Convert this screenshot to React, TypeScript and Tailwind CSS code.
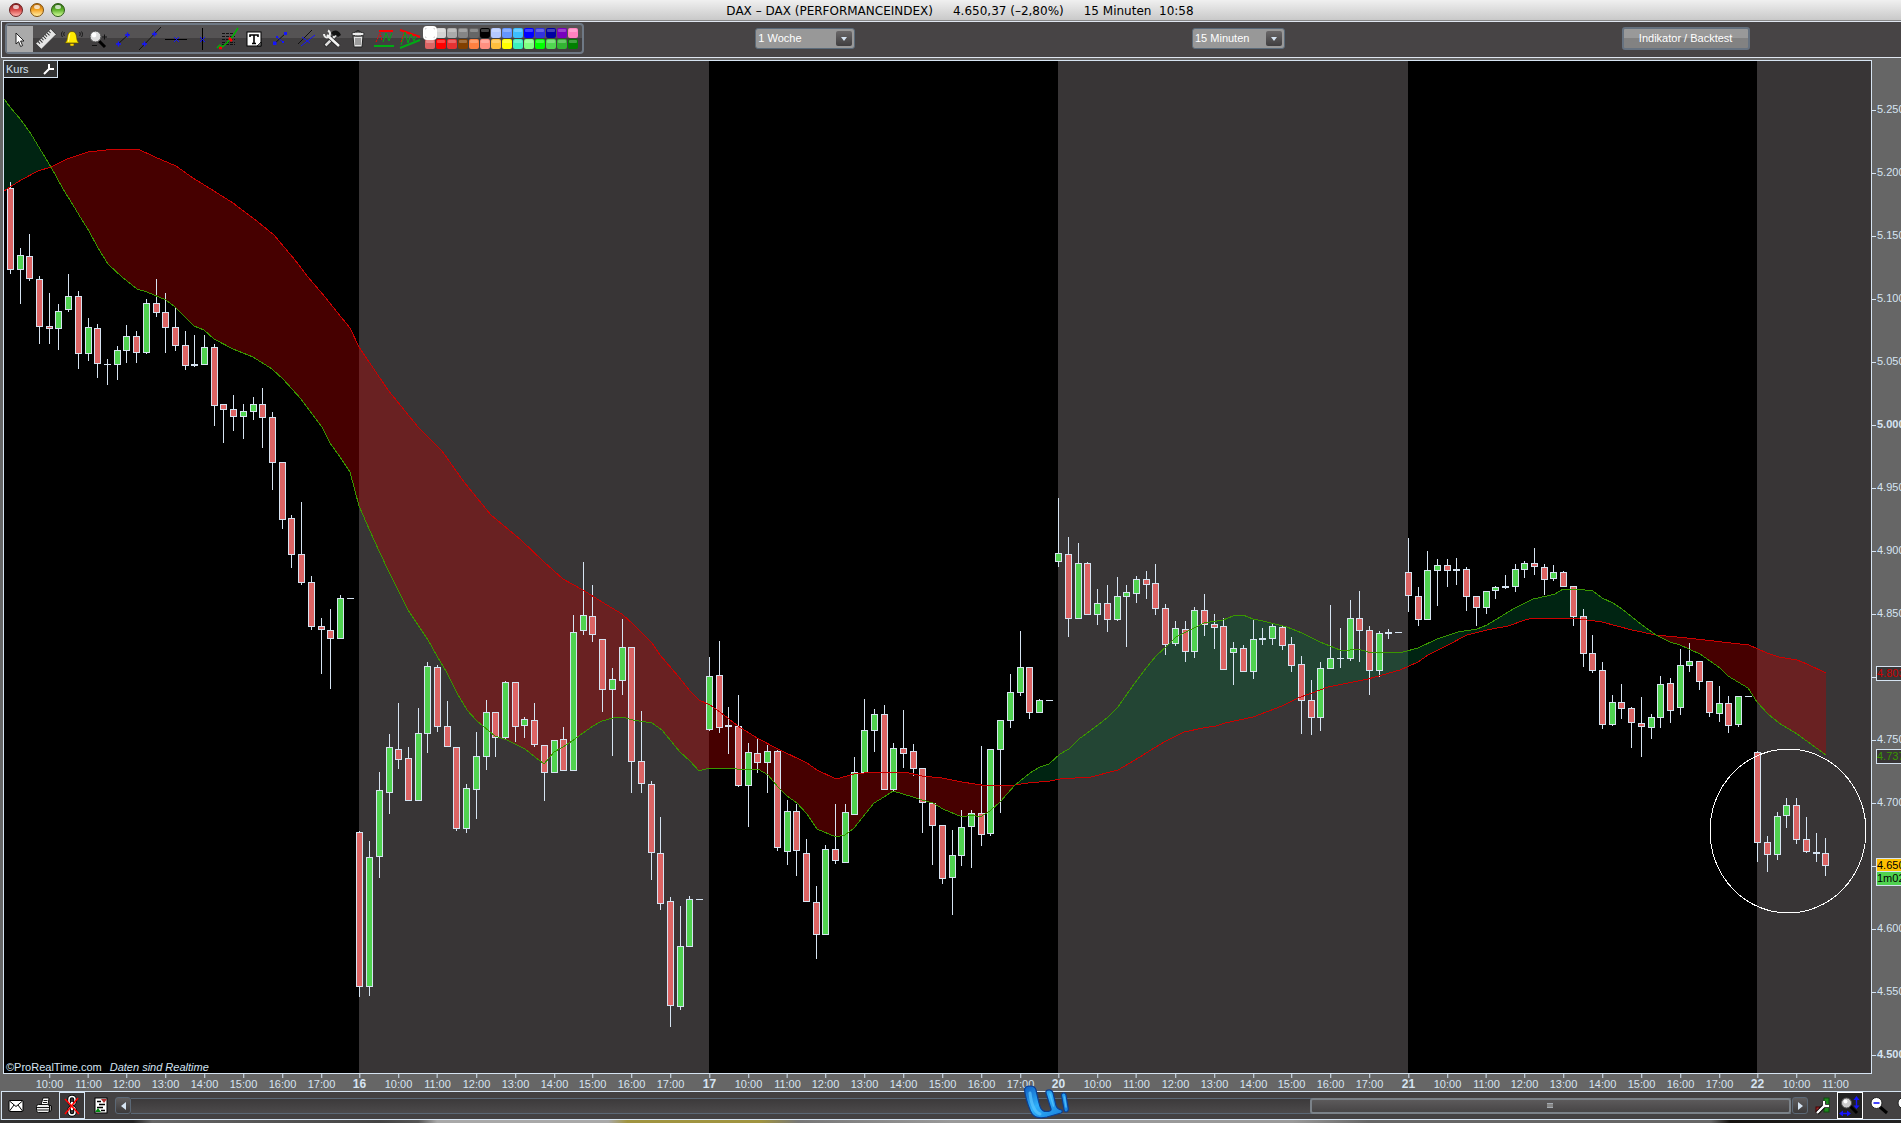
import React from "react";

const UI = "font-['Liberation_Sans',Arial,sans-serif]";

/* Each session holds 36 quarter-hour bars: colour, high, body top, body bottom, low. */
const SESSIONS: string[] = [
  "r182,188,270,274 g248,255,270,304 r234,256,279,281 r276,279,327,344 r293,326,329,344 g304,311,329,350 g274,296,310,312 r291,296,354,369 g318,327,354,361 r324,328,364,378 d359,364,365,385 g346,350,365,380 g325,336,351,363 r331,336,353,363 g299,303,353,354 r279,303,313,317 r293,312,328,353 r308,327,346,351 r331,345,366,370 d335,364,366,367 g335,347,365,365 r344,347,406,426 r404,404,410,443 r395,409,417,431 g404,411,417,439 g397,404,412,420 r388,404,418,448 r412,417,463,490 r462,462,520,529 r515,518,555,568 r502,554,583,585 r576,582,627,630 r618,626,630,674 r609,630,639,689 g595,598,639,639 d598,598,599,599",
  "r831,832,987,997 g841,857,987,996 g772,790,857,878 g734,747,793,814 r703,749,760,769 r747,758,801,801 g708,733,801,801 g662,666,734,753 r665,667,727,732 r701,726,747,747 r747,747,829,831 g784,788,829,833 g732,756,790,819 g700,712,757,770 r712,712,738,757 g681,682,738,739 r682,682,727,742 g717,719,726,738 r703,720,745,747 r745,745,773,801 g740,740,773,773 r727,739,771,771 g615,632,771,771 g562,615,631,635 r585,616,635,642 r639,639,690,712 g668,679,690,756 g619,647,681,695 r647,647,762,793 r711,761,784,793 r781,784,853,880 r817,853,904,910 r897,901,1006,1027 g906,946,1007,1010 g896,899,947,947 d899,899,900,900",
  "g657,676,730,731 r641,675,728,733 d707,725,727,754 r695,726,786,787 g743,752,786,827 r739,753,763,773 g745,751,763,793 r750,751,848,851 g800,811,852,865 r804,811,851,876 r839,853,902,902 r886,902,935,959 g845,849,935,935 r804,849,861,864 g804,812,863,863 g757,772,815,815 g699,730,773,773 g709,714,731,752 r705,714,790,790 g743,748,790,792 r710,748,754,768 r744,751,769,776 r768,768,803,833 r803,803,826,865 r825,825,879,884 g830,855,878,915 g810,827,856,866 g810,813,827,868 r746,813,835,846 g749,749,834,836 g720,720,750,813 g674,692,721,728 g631,667,693,696 r667,667,713,719 g699,700,713,713 d700,700,701,701",
  "g498,553,562,567 r537,554,619,637 g543,563,619,619 r562,563,615,615 g589,603,615,625 r585,603,620,632 g577,596,620,621 g585,592,597,647 g576,579,594,603 r571,579,585,599 r564,583,609,615 r604,608,645,655 g621,628,644,646 r621,629,652,662 g607,610,652,658 r594,610,625,636 r614,624,628,649 r618,626,670,670 g642,648,653,685 r645,648,672,672 g620,639,672,679 d628,638,640,645 g624,626,639,645 r626,627,646,650 r637,644,666,672 r656,664,701,734 r680,700,718,735 g662,668,718,731 g605,658,669,669 d628,658,659,668 g600,618,659,661 r591,618,631,662 r626,630,671,695 g631,633,671,677 d629,632,634,639 d632,632,633,633",
  "r538,572,596,612 r587,596,620,626 g551,570,620,620 g559,565,571,606 r559,565,571,587 d558,569,571,585 r567,569,597,611 r596,596,608,626 g591,591,608,614 g586,587,591,599 d575,586,588,589 g564,569,587,592 g561,563,570,578 r548,563,567,575 r564,567,580,595 g565,572,579,581 r571,572,587,587 r586,586,617,626 r609,616,654,667 r635,653,671,673 r662,670,725,729 g695,702,725,726 r684,702,709,719 r707,708,723,748 r697,723,727,757 g714,717,728,739 g676,684,718,728 r678,683,711,723 g649,665,708,715 g643,661,666,672 r661,661,682,690 r681,681,713,717 g686,703,714,722 r696,703,726,733 g696,696,725,727 d696,696,697,697",
  "r751,752,843,862 r836,842,855,872 g812,816,855,860 g798,805,816,828 r798,805,840,844 r817,839,852,853 d833,852,854,862 r838,853,866,876",
];

type Pt = [number, number];
const parse = (s: string): Pt[] => s.split(" ").map((p) => p.split(",").map(Number) as Pt);

const SLOW = parse(
  "4,191 10,187 21,180 38,171 51,167 67,159 88,152 115,149 138,149 155,157 176,166 193,178 214,191 233,203 253,218 274,235 295,260 308,277 325,297 337,312 350,328 359,347 388,390 418,427 442,451 464,482 491,515 521,540 544,562 563,579 583,590 602,602 622,614 633,624 652,643 660,655 678,676 690,691 699,700 710,705 720,712 738,726 757,738 778,749 807,763 817,770 836,779 854,774 874,772 884,773 894,772 905,772 922,776 942,778 962,782 988,786 1015,785 1028,783 1050,781 1060,779 1091,777 1118,770 1140,757 1154,748 1166,741 1184,732 1203,728 1216,726 1225,723 1253,717 1282,706 1298,698 1312,693 1328,687 1368,679 1400,670 1418,662 1428,655 1448,645 1467,635 1487,630 1508,626 1525,620 1533,618 1553,618 1580,619 1602,622 1632,630 1656,635 1687,638 1740,644 1749,645 1767,653 1779,657 1797,660 1807,664 1826,673"
);
const FAST = parse(
  "4,99 10,107 21,120 31,134 40,149 51,167 63,189 73,205 82,220 89,231 98,248 108,264 122,277 137,289 147,292 166,300 175,307 194,326 204,330 214,339 233,349 253,357 272,369 283,379 301,399 322,427 330,443 340,457 350,472 359,506 374,540 388,570 408,610 428,640 437,656 447,673 457,693 467,710 477,721 495,736 507,740 525,749 535,757 544,764 554,752 563,747 575,739 583,733 593,726 602,721 613,718 622,717 633,720 652,723 662,730 680,752 690,761 699,771 709,768 718,769 728,768 737,769 758,769 768,775 778,787 787,796 797,803 807,814 817,829 836,837 845,835 854,828 874,803 884,797 893,791 903,794 913,797 922,800 933,803 943,809 962,817 972,815 980,817 990,811 1000,802 1015,785 1030,773 1040,767 1049,764 1060,754 1069,749 1079,739 1098,725 1108,717 1118,707 1127,694 1137,680 1147,667 1156,656 1167,646 1176,637 1194,628 1204,623 1223,620 1233,616 1243,615 1253,619 1263,621 1287,627 1302,633 1320,642 1340,650 1350,650 1358,649 1368,652 1385,652 1403,652 1418,648 1437,639 1458,632 1477,629 1487,625 1505,614 1515,608 1533,599 1547,596 1555,594 1563,589 1577,589 1593,591 1602,598 1613,603 1622,609 1642,625 1656,635 1670,642 1680,645 1700,654 1720,668 1728,676 1748,688 1757,702 1768,714 1779,723 1797,734 1826,755"
);

const str = (p: Pt[]) => p.map((q) => q.join(",")).join(" ");
const band = (a: number, b: number) => {
  const cut = (l: Pt[]) => l.filter(([x]) => x >= a && x <= b);
  return str([...cut(SLOW), ...cut(FAST).reverse()]);
};
const BANDS: [number, number, string][] = [
  [4, 51, "rgb(0,100,50)"],
  [51, 1015, "rgb(194,0,0)"],
  [1015, 1656, "rgb(0,100,50)"],
  [1656, 1830, "rgb(194,0,0)"],
];

const barX = (i: number) => Math.floor(10.4 + 9.708 * i);

function Chart() {
  return (
    <svg className="block h-full w-full" viewBox="4 61 1867 1012" preserveAspectRatio="none" shapeRendering="crispEdges" role="img" aria-label="DAX 15 Minuten">
      <rect x="4" y="61" width="1867" height="1012" fill="#000" />
      <rect x="359" y="61" width="350" height="1012" fill="#383536" />
      <rect x="1058" y="61" width="350" height="1012" fill="#383536" />
      <rect x="1757" y="61" width="114" height="1012" fill="#383536" />
      {BANDS.map(([a, b, c]) => (
        <polygon key={a} points={band(a, b)} fill={c} fillOpacity="0.36" />
      ))}
      {SESSIONS.flatMap((day, d) =>
        day.split(" ").map((bar, i) => {
          const [h, t, b, l] = bar.slice(1).split(",").map(Number);
          const x = barX(d * 36 + i);
          const kind = bar[0];
          return (
            <g key={d * 36 + i} fill="#d6e4f2">
              {h < t && <rect x={x} y={h} width="1" height={t - h} />}
              {l > b && <rect x={x} y={b} width="1" height={l - b} />}
              <rect x={x - 3} y={t} width="7" height={b - t} />
              {kind !== "d" && <rect x={x - 2} y={t + 1} width="5" height={b - t - 2} fill={kind === "g" ? "#50d250" : "#dc6464"} />}
            </g>
          );
        })
      )}
      <polyline points={str(SLOW)} fill="none" stroke="#cc0000" />
      <polyline points={str(FAST)} fill="none" stroke="#399600" />
      <ellipse cx="1788" cy="831" rx="78" ry="82" fill="none" stroke="#fff" />
    </svg>
  );
}

const DAYS = ["", "16", "17", "20", "21", "22"];
const TIMES = DAYS.flatMap((name, d) => {
  const out: { label: string; i: number; bold: boolean }[] = [];
  if (name) out.push({ label: name, i: d * 36, bold: true });
  for (let h = 10; h <= (d === 5 ? 11 : 17); h++) out.push({ label: `${h}:00`, i: d * 36 + (h - 9) * 4, bold: false });
  return out;
});
const PRICES = Array.from({ length: 16 }, (_, k) => {
  const v = 5250 - k * 50;
  const s = String(v);
  return { label: `${s[0]}.${s.slice(1)}`, y: 110 + k * 63, bold: v % 500 === 0, hidden: v === 4800 || v === 4650 };
});
const TAGS = [
  { label: "4.803", y: 666, cls: "bg-[#383536] text-[#cc0000]" },
  { label: "4.737", y: 749, cls: "bg-[#383536] text-[#399600]" },
  { label: "4.650", y: 858, cls: "bg-[#ffc000] text-black" },
  { label: "1m02", y: 871, cls: "bg-[#50d250] text-black" },
];

const Svg = ({ children }: { children: React.ReactNode }) => (
  <svg width="26" height="26" viewBox="0 0 26 26" fill="none" aria-hidden="true">
    {children}
  </svg>
);
const cross = (x: number, y: number) => `M${x - 2} ${y}h5M${x + 0.5} ${y - 2.5}v5`;

const TOOLS: { name: string; icon: React.ReactNode }[] = [
  { name: "Auswahl", icon: <path d="M9 7v11l2.6-2.3 2 4.8 2-.9-2-4.6h3.4z" fill="#fff" stroke="#111" strokeWidth=".9" /> },
  {
    name: "Lineal",
    icon: (
      <g transform="rotate(-45 13 13)">
        <rect x="2.500" y="9" width="21" height="8" fill="#e6e6e6" stroke="#333" strokeWidth=".8" />
        <path d="M5.500 9v3M8 9v4M10.500 9v3M13 9v4M15.500 9v3M18 9v4M20.500 9v3" stroke="#333" />
      </g>
    ),
  },
  {
    name: "Alarm",
    icon: (
      <>
        <path d="M13 5.500c-4 0-4.500 4-4.800 7-.2 2.300-1.200 3.300-2.200 4.500h14c-1-1.200-2-2.200-2.200-4.500-.3-3-.8-7-4.800-7z" fill="#ffea00" stroke="#5a4c00" strokeWidth=".7" />
        <path d="M11 7.500c-1 2-1 5-1.500 8" stroke="#fffbb0" />
        <rect x="11" y="17.500" width="4" height="2.500" rx="1" fill="#ffd800" stroke="#5a4c00" strokeWidth=".5" />
        <path d="M5.500 6c-1 1-1 3 0 4M3.500 5.500c-1.300 1.500-1.300 4 0 5.500M20.500 6c1 1 1 3 0 4M22.500 5.500c1.300 1.500 1.300 4 0 5.500" stroke="#111" strokeWidth=".9" />
      </>
    ),
  },
  {
    name: "Zoom",
    icon: (
      <>
        <path d="M14 15l6 6" stroke="#000" strokeWidth="3" />
        <circle cx="10.500" cy="10.500" r="5.500" fill="#ddd" stroke="#444" />
        <circle cx="9" cy="9" r="2.400" fill="#fff" />
        <path d="M17 11h5M19.500 8.500v5M7 19.500h5" stroke="#111" />
      </>
    ),
  },
  { name: "Segment", icon: <><path d="M7 18l11-10" stroke="#111" /><path d={cross(7, 18) + cross(16, 9)} stroke="#1414ff" strokeWidth="1.400" /></> },
  { name: "Gerade", icon: <><path d="M2 24L24 1" stroke="#111" /><path d={cross(7, 18) + cross(17, 8)} stroke="#1414ff" strokeWidth="1.400" /></> },
  { name: "Horizontale", icon: <><path d="M2 13.500h22" stroke="#000" /><path d="M11 11l5 5M16 11l-5 5" stroke="#1414ff" /></> },
  { name: "Vertikale", icon: <><path d="M13.500 2v22" stroke="#000" /><path d="M11 11l5 5M16 11l-5 5" stroke="#1414ff" /></> },
  {
    name: "Fibonacci",
    icon: (
      <>
        <path d="M7 7.500h13M7 10.500h13M7 13.500h13M7 16.500h13M7 18.500h13" stroke="#111" strokeDasharray="3 1" />
        <path d="M2 22l3-3 2 2 5-4 3-4 3-3 5-8" stroke="#00b400" strokeWidth="1.500" />
        <path d="M4 22h3M14 12l3 3" stroke="red" strokeWidth="2.500" />
      </>
    ),
  },
  {
    name: "Text",
    icon: (
      <>
        <rect x="6" y="6" width="14" height="14" fill="#fff" stroke="#000" />
        <path d="M9 11V9h8v2M13 9v8M11 17.500h4" stroke="#000" strokeWidth="1.600" />
        <path d="M20 16l-4 4h4z" fill="#777" stroke="#000" strokeWidth=".7" />
      </>
    ),
  },
  { name: "Pfeil", icon: <><path d="M7 18L19 7" stroke="#111" /><path d="M10 11l6 5" stroke="#1414ff" /><path d="M6 19v-3.500h3.500V19zM17 9V6h3v3zM9 12v-2h2v2zM15 17v-2h2v2z" fill="#1414ff" /></> },
  { name: "Kanal", icon: <><path d="M5 18L19 4" stroke="#111" /><path d="M8 20L22 9M9 11l8 6" stroke="#1414ff" /></> },
  {
    name: "Werkzeuge",
    icon: (
      <>
        <path d="M6 20L17 9" stroke="#222" strokeWidth="4" />
        <path d="M6.500 19.500L17 9" stroke="#ddd" strokeWidth="2.500" />
        <path d="M12 7c3-4 8-3 10 2l-3 2-2-2-2 1z" fill="#111" />
        <path d="M8 9l12 11" stroke="#222" strokeWidth="4" />
        <path d="M8 9l12 11" stroke="#f4f4f4" strokeWidth="2.500" />
        <path d="M5 8c0 3 2 4 5 3M9 4.500c2 1 2.500 3 1.500 6" stroke="#eee" strokeWidth="2" />
      </>
    ),
  },
  {
    name: "Papierkorb",
    icon: (
      <>
        <path d="M8 10l1 11h8l1-11z" fill="#e4e4e4" stroke="#222" />
        <ellipse cx="13" cy="8" rx="6.500" ry="2" fill="#eee" stroke="#222" />
        <path d="M11 6c0-2 4-2 4 0" stroke="#222" />
        <path d="M11 12v7M13 12v7M15 12v7" stroke="#555" />
      </>
    ),
  },
  {
    name: "Rechteckmuster",
    icon: <><path d="M8 5h14" stroke="red" strokeWidth="2" /><path d="M3 20h20" stroke="#00aa14" strokeWidth="2" /><path d="M5 16l4-9 2 8" stroke="red" strokeDasharray="2 1" /><path d="M12 16l3-9 3 8 3-8" stroke="#00aa14" /></>,
  },
  {
    name: "Dreieckmuster",
    icon: <><path d="M3 4l20 7" stroke="red" strokeWidth="2" /><path d="M3 22l20-8" stroke="#00aa14" strokeWidth="2" /><path d="M4 19L8 6l3 11 3-9 3 7 2-5" stroke="#00aa14" /><path d="M4 16l3-9" stroke="red" strokeDasharray="2 1" /></>,
  },
];

const SWATCHES = [
  "bg-[#ffffff]", "bg-[#d3d3d3]", "bg-[#aaaaaa]", "bg-[#858585]", "bg-[#666666]", "bg-[#000000]", "bg-[#b4c8ff]",
  "bg-[#6496ff]", "bg-[#3cbeff]", "bg-[#0000ff]", "bg-[#3232dc]", "bg-[#0000a0]", "bg-[#7800be]", "bg-[#ff82c0]",
  "bg-[#dc6464]", "bg-[#ff0000]", "bg-[#e63232]", "bg-[#824000]", "bg-[#ff8040]", "bg-[#ff9080]", "bg-[#ffbe3c]",
  "bg-[#ffff00]", "bg-[#3cf0be]", "bg-[#80ff80]", "bg-[#00ff00]", "bg-[#50d750]", "bg-[#32b432]", "bg-[#008000]",
];

function Dropdown({ label, value, width }: { label: string; value: string; width: string }) {
  return (
    <div className={`relative h-[21px] rounded-[3px] border border-[#5b6b7a] bg-[#989898] ${width}`}>
      <select aria-label={label} className="block h-[19px] w-full appearance-none bg-transparent pb-px pl-[2px] text-[11px] leading-[18px] text-white outline-none">
        <option>{value}</option>
      </select>
      <span className="pointer-events-none absolute top-[2px] right-[2px] flex h-[15px] w-[16px] items-center justify-center rounded-[2px] bg-linear-to-b from-[#6a6869] to-[#403e3f]">
        <svg width="6" height="4" viewBox="0 0 6 4"><path d="M0 0h6L3 4z" fill="#d6e4f2" /></svg>
      </span>
    </div>
  );
}

const LIGHTS = [
  { name: "Schließen", cls: "from-[#8a1c1c] via-[#d84a4a] to-[#ffb4b0] border-[#6b2020]" },
  { name: "Minimieren", cls: "from-[#b86a08] via-[#f5a623] to-[#fff0a0] border-[#80500c]" },
  { name: "Zoomen", cls: "from-[#2c6a10] via-[#62b52c] to-[#d4ff98] border-[#2c5a14]" },
];

const LOGO =
  "M1.500 4.500C2 1.500 4 1 7 1C10.500 1 12.500 2.500 13 5L15.300 15C16.500 20 17.500 26.500 23 26.500C26 26.500 28.500 26 28 24L23 8C22.500 5.500 24 4.800 26.300 4.800C28.500 4.800 29.500 6 30 8L33 20.500C34 23.500 36 24.500 38.700 25C39.500 26 39.500 27.500 38 28L24 32C14 34.500 9.500 31 7.500 26C5 20 2 10 1.500 4.500Z M38.500 10C38.500 8.500 39.500 7.800 40.700 7.800C42 7.800 42.800 8.600 43 10L45.300 23.500C45.500 25.500 44.500 27 43 27C41.800 27 41.200 26 41 24.500Z";

export default function App() {
  return (
    <div className={`flex h-screen w-full flex-col overflow-hidden bg-[#666] text-[#d6e4f2] ${UI}`}>
      <header className="relative flex h-[21px] shrink-0 items-center justify-center border-b border-[#868686] bg-linear-to-b from-[#f0f0f0] to-[#c9c9c9] pl-[19px]">
        <div className="absolute top-[3px] left-[9px] flex gap-[7px]">
          {LIGHTS.map((l) => (
            <button key={l.name} aria-label={l.name} className={`relative h-[14px] w-[14px] rounded-full border bg-linear-to-b ${l.cls}`}>
              <span className="absolute top-px left-[3px] h-[4px] w-[6px] rounded-full bg-white/70" />
            </button>
          ))}
        </div>
        <h1 className="flex gap-[20px] pt-px font-['DejaVu_Sans',sans-serif] text-[12px] leading-[20px] whitespace-pre text-black">
          <span>DAX – DAX (PERFORMANCEINDEX)</span>
          <span>4.650,37 (–2,80%)</span>
          <span>15 Minuten  10:58</span>
        </h1>
      </header>

      <div className="ml-px flex h-[37px] shrink-0 items-center border-y border-l border-[#dfe6f0] bg-[#474445] pb-[2px]">
        <div className="ml-[3px] flex h-[31px] shrink-0 items-center rounded-[4px] border-2 border-[#6f7985] bg-linear-to-b from-[#555354] from-50% to-[#413f40] to-50% pr-[4px]">
          {TOOLS.map((t, i) => (
            <button key={t.name} aria-label={t.name} className={`h-[26px] w-[26px] ${i === 0 ? "bg-[#aaa]" : ""}`}>
              <Svg>{t.icon}</Svg>
            </button>
          ))}
          <div className="ml-[2px] grid grid-cols-14 gap-px">
            {SWATCHES.map((c, i) => (
              <button key={c} aria-label={`Farbe ${i + 1}`} className={`relative h-[10px] w-[10px] rounded-[2px] ${c} ${i === 0 ? "z-10 outline-2 outline-white" : ""}`}>
                {i > 0 && <span className="absolute inset-x-px top-px h-[3px] rounded-[1px] bg-white/25" />}
              </button>
            ))}
          </div>
        </div>
        <div className="-mr-[17px] ml-[3px] flex grow items-center justify-around">
          <Dropdown label="Zeitraum" value="1 Woche" width="w-[100px]" />
          <Dropdown label="Intervall" value="15 Minuten" width="w-[93px]" />
          <button className="h-[23px] w-[128px] rounded-[3px] border-2 border-[#667280] bg-linear-to-b from-[#999] from-50% to-[#828282] to-50% pb-px text-[11px] leading-[18px] text-white">
            Indikator / Backtest
          </button>
        </div>
      </div>

      <main className="flex min-h-0 grow flex-col pt-[2px] pl-[3px]">
        <div className="flex min-h-0 grow">
          <div className="relative min-w-0 grow border border-[#d6e4f2]">
            <div className="absolute inset-0">
              <Chart />
            </div>
            <div className="absolute -top-px -left-px flex h-[18px] w-[55px] items-center justify-between border border-[#d6e4f2] bg-[#333] pr-[3px] pb-px pl-[2px] text-[11px] leading-[14px]">
              Kurs
              <button aria-label="Kurs einstellen">
                <svg width="11" height="12" viewBox="0 0 11 12" fill="none" stroke="#fff" strokeWidth="2">
                  <path d="M1 11l5-5M6 6V1M6 6h5" />
                </svg>
              </button>
            </div>
            <p className="absolute -bottom-px left-[2px] flex gap-[8px] text-[11px] leading-[13px]">
              <span>©ProRealTime.com</span>
              <em>Daten sind Realtime</em>
            </p>
          </div>
          <div className="relative my-px w-[29px] shrink-0 overflow-hidden text-[11px] leading-[12px]">
            {PRICES.map((p) => (
              <div key={p.label} className="absolute left-0 flex gap-px" style={{ top: `${((p.y - 61) / 1012) * 100}%` }}>
                <span className="h-px w-[4px] shrink-0 bg-[#d6e4f2]" />
                {!p.hidden && <span className={`-mt-[7px] ${p.bold ? "font-bold" : ""}`}>{p.label}</span>}
              </div>
            ))}
            {TAGS.map((t) => (
              <div key={t.label} className={`absolute left-[4px] h-[15px] border border-[#d6e4f2] text-[11px] leading-[13px] ${t.cls}`} style={{ top: `${((t.y - 61) / 1012) * 100}%` }}>
                {t.label}
              </div>
            ))}
          </div>
        </div>
        <div className="relative mr-[30px] ml-px h-[17px] shrink-0 text-[11px] leading-[13px]">
          {TIMES.map((t) => (
            <div key={t.i} className="absolute top-0 flex -translate-x-1/2 flex-col items-center" style={{ left: `${((barX(t.i) - 3.5) / 1867) * 100}%` }}>
              <span className="h-[4px] w-px bg-[#d6e4f2]" />
              <span className={t.bold ? "text-[12px] font-bold" : ""}>{t.label}</span>
            </div>
          ))}
          <svg className="absolute top-[11px] left-[54.6%] z-10" width="48" height="35" viewBox="0 0 48 35" aria-hidden="true">
            <defs>
              <linearGradient id="logo" x1="0" y1="0" x2="1" y2="1">
                <stop offset="0" stopColor="#0f5cc0" />
                <stop offset="0.45" stopColor="#2fb0fa" />
                <stop offset="1" stopColor="#1478d8" />
              </linearGradient>
            </defs>
            <path d={LOGO} fill="url(#logo)" stroke="#0b3f94" strokeWidth="1.200" />
            <path d="M7 8c1 9 4 19 10 21" fill="none" stroke="#5cc8ff" strokeWidth="3" strokeLinecap="round" opacity=".7" />
            <path d="M27 9l3.500 12M41.500 12l1.500 10" fill="none" stroke="#5cc8ff" strokeWidth="1.500" strokeLinecap="round" opacity=".7" />
          </svg>
        </div>
      </main>

      <footer className="ml-px flex h-[29px] shrink-0 items-center border-y border-l border-[#d6e4f2] bg-[#434142]">
        <button aria-label="E-Mail" className="ml-[6px] flex h-[27px] w-[16px] shrink-0 items-center">
          <svg className="shrink-0" width="16" height="14" viewBox="0 0 16 14" fill="#fff" stroke="#000"><rect x="1" y="1.500" width="14" height="11" rx="1" /><path d="M1.500 2l6.500 5.500L14.500 2M1.500 12l4.500-6M14.500 12L10 6" fill="none" /></svg>
        </button>
        <button aria-label="Drucken" className="ml-[11px] flex h-[27px] w-[18px] shrink-0 items-center">
          <svg className="shrink-0" width="18" height="18" viewBox="0 0 18 18" stroke="#000" strokeWidth=".9"><path d="M6 8l2-7h6l-1 7z" fill="#fff" /><path d="M8.500 3.500h4M8 5.500h4" /><rect x="1.500" y="7.500" width="13" height="8" rx="2" fill="#eee" /><path d="M14.500 8l2 1v4l-2 2z" fill="#999" /><path d="M2 10.500h12M2 13h12" /></svg>
        </button>
        <button aria-label="Verknüpfung" className="ml-[6px] flex h-[27px] w-[26px] shrink-0 items-center justify-center border border-[#d6e4f2] bg-[#3a3839]">
          <svg width="18" height="22" viewBox="0 0 18 22" fill="none"><rect x="6" y="1.500" width="6" height="8" rx="3" stroke="#000" strokeWidth="3.500" /><rect x="6" y="12" width="6" height="8" rx="3" stroke="#000" strokeWidth="3.500" /><rect x="6" y="1.500" width="6" height="8" rx="3" stroke="#fff" strokeWidth="1.500" /><rect x="6" y="12" width="6" height="8" rx="3" stroke="#fff" strokeWidth="1.500" /><path d="M9 7v8" stroke="#fff" strokeWidth="2" /><path d="M2 4l14 15M15 3L2 19" stroke="red" strokeWidth="1.600" /></svg>
        </button>
        <button aria-label="Liste" className="ml-[9px] flex h-[27px] w-[16px] shrink-0 items-center">
          <svg className="shrink-0" width="15" height="17" viewBox="0 0 15 17"><rect x="1" y="1" width="12" height="15" fill="#fff" stroke="#000" /><path d="M3 4.500h4M5 7.500h6M3 10.500h6M7 13.500h4" stroke="#000" strokeWidth="1.500" /><path d="M7 2h6l-3 4z" fill="#b03030" /><path d="M1 15h6l-3-4z" fill="#008a10" /></svg>
        </button>
        <button aria-label="Zurück" className="ml-[5px] flex h-[17px] w-[16px] shrink-0 items-center justify-center rounded-[3px] border border-[#5b6876] bg-linear-to-b from-[#605e5f] to-[#3c3a3b]">
          <svg width="5" height="8" viewBox="0 0 5 8"><path d="M5 0v8L0 4z" fill="#d6e4f2" /></svg>
        </button>
        <div className="flex h-[16px] grow justify-end border-y border-[#5b6876] bg-linear-to-b from-[#3c3a3b] to-[#4c4a4b]">
          <div className="-my-px flex w-[29%] items-center justify-center rounded-[3px] border-2 border-[#7b8289] bg-linear-to-b from-[#5c5a5b] to-[#474546]">
            <span className="mr-px h-[5px] w-[6px] border-y border-[#a5abb2] bg-[#868686]" />
          </div>
        </div>
        <button aria-label="Vor" className="ml-px flex h-[17px] w-[16px] shrink-0 items-center justify-center rounded-[3px] border border-[#5b6876] bg-linear-to-b from-[#605e5f] to-[#3c3a3b]">
          <svg width="5" height="8" viewBox="0 0 5 8"><path d="M0 0v8l5-4z" fill="#d6e4f2" /></svg>
        </button>
        <button aria-label="Einstellungen" className="ml-[6px] flex h-[27px] w-[18px] shrink-0 items-center">
          <svg className="shrink-0" width="18" height="20" viewBox="0 0 18 20" fill="none"><rect x="10" y="2" width="5" height="14" fill="#1e8a1e" stroke="#0c4a0c" /><rect x="2" y="11" width="4" height="5" fill="#a02828" stroke="#400" /><path d="M3 17l7-7M10 10V5M10 10h5" stroke="#000" strokeWidth="4" /><path d="M3 17l7-7M10 10V5M10 10h5" stroke="#fff" strokeWidth="2.400" /></svg>
        </button>
        <button aria-label="Autozoom" className="ml-[5px] flex h-[27px] w-[26px] shrink-0 items-center justify-center border border-white bg-[#222]">
          <svg className="shrink-0" width="22" height="20" viewBox="0 0 22 20" fill="none"><path d="M11 10l7 7" stroke="#000" strokeWidth="3" /><circle cx="7.500" cy="7" r="5" fill="#ccc" stroke="#555" /><circle cx="6.500" cy="5.500" r="2" fill="#fff" /><path d="M17.500 3v8M3 17.500h7" stroke="#1414ff" strokeWidth="1.400" /><path d="M17.500 0l3 4h-6zM17.500 13l3-3.500h-6zM0 17.500l4-3v6zM12 17.500l-4-3v6z" fill="#1414ff" /></svg>
        </button>
        <button aria-label="Verkleinern" className="ml-[7px] flex h-[27px] w-[19px] shrink-0 items-center">
          <svg className="shrink-0" width="19" height="20" viewBox="0 0 19 20" fill="none"><path d="M10 11l7 6" stroke="#000" strokeWidth="3" /><circle cx="6.500" cy="7" r="5.500" fill="#fff" stroke="#222" /><path d="M3.500 7h6" stroke="#1414ff" strokeWidth="1.600" /></svg>
        </button>
        <button aria-label="Vergrößern" className="ml-[8px] flex h-[27px] w-[4px] shrink-0 items-center overflow-hidden">
          <svg className="shrink-0" width="19" height="20" viewBox="0 0 19 20" fill="none"><circle cx="6.500" cy="7" r="5.500" fill="#fff" stroke="#222" /></svg>
        </button>
      </footer>
      <div className="h-[3px] shrink-0 bg-[linear-gradient(90deg,#333_0%,#222_7%,#666_8%,#444_20%,#555_22%,#a8a8a8_23%,#a8a8a8_32%,#a09440_33%,#a09440_40%,#777_42%,#999_50%,#999_68%,#666_72%,#666_90%,#151310_91%,#222_100%)]" />
    </div>
  );
}
